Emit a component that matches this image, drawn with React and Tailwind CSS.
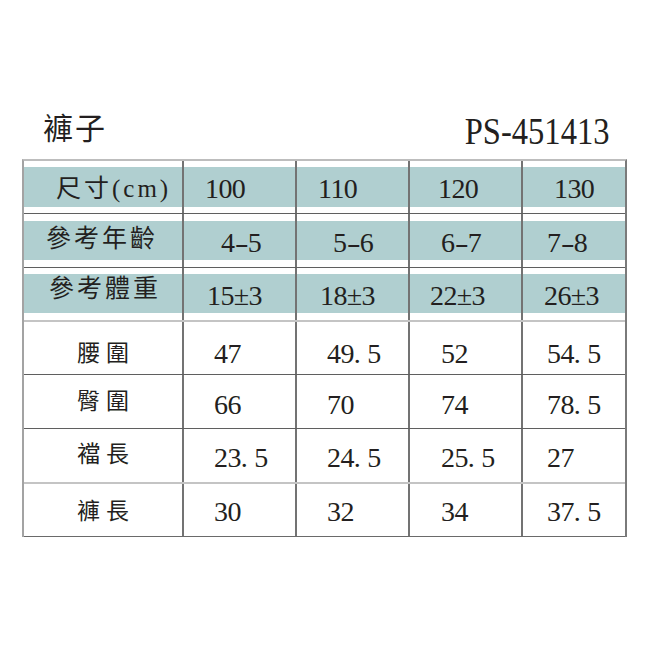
import React from "react";

const FONT = "[font-family:Liberation_Serif,Noto_Sans_CJK_TC,serif]";

function Num({ text }) {
  return (
    <span className="text-[28px] leading-none tracking-[-0.6px] whitespace-nowrap">
      {text.split("").map((ch, i) => {
        if (ch === ".")
          return (
            <span key={i} className="inline-block w-[0.48em]">
              .
            </span>
          );
        if (ch === "-")
          return (
            <span key={i} className="inline-block w-[0.48em] text-center">
              <span className="inline-block scale-x-150">-</span>
            </span>
          );
        return <span key={i}>{ch}</span>;
      })}
    </span>
  );
}

const COLS = [
  "w-[160px] border-r-2 border-r-[#737373]",
  "w-[113px] border-r-2 border-r-[#737373]",
  "w-[113px] border-r-2 border-r-[#737373]",
  "w-[113px] border-r-2 border-r-[#737373]",
  "w-[102px]",
];

const headerRows = [
  {
    row: "h-[53px] border-b border-b-[#5f5f5f]",
    mt: "mt-[6px]",
    band: "h-[40px]",
    label: "尺寸(cm)",
    labelCls: "pl-[32px] pt-[9px]",
    cells: [
      { t: "100", c: "pl-[21px] pt-[8px]" },
      { t: "110", c: "pl-[21px] pt-[8px]" },
      { t: "120", c: "pl-[28px] pt-[8px]" },
      { t: "130", c: "pl-[31px] pt-[8px]" },
    ],
  },
  {
    row: "h-[54px] border-b border-b-[#5f5f5f]",
    mt: "mt-[7px]",
    band: "h-[39px]",
    label: "參考年齡",
    labelCls: "pl-[22px] pt-[5px]",
    cells: [
      { t: "4-5", c: "pl-[37px] pt-[8px]" },
      { t: "5-6", c: "pl-[36px] pt-[8px]" },
      { t: "6-7", c: "pl-[31px] pt-[8px]" },
      { t: "7-8", c: "pl-[24px] pt-[8px]" },
    ],
  },
  {
    row: "h-[54px] border-b-2 border-b-[#c4c4c4]",
    mt: "mt-[6px]",
    band: "h-[39px]",
    label: "參考體重",
    labelCls: "pl-[25px] pt-[2px]",
    cells: [
      { t: "15±3", c: "pl-[23px] pt-[8px]" },
      { t: "18±3", c: "pl-[23px] pt-[8px]" },
      { t: "22±3", c: "pl-[20px] pt-[8px]" },
      { t: "26±3", c: "pl-[21px] pt-[8px]" },
    ],
  },
];

const dataRows = [
  {
    row: "h-[53px] border-b border-b-[#5f5f5f]",
    label: "腰圍",
    labelPt: "pt-[20px]",
    pt: "pt-[18px]",
    vals: ["47", "49.5", "52", "54.5"],
  },
  {
    row: "h-[54px] border-b border-b-[#5f5f5f]",
    label: "臀圍",
    labelPt: "pt-[15px]",
    pt: "pt-[16px]",
    vals: ["66", "70", "74", "78.5"],
  },
  {
    row: "h-[55px] border-b-2 border-b-[#c4c4c4]",
    label: "襠長",
    labelPt: "pt-[14px]",
    pt: "pt-[15px]",
    vals: ["23.5", "24.5", "25.5", "27"],
  },
  {
    row: "h-[53px] border-b border-b-[#6a6a6a]",
    label: "褲長",
    labelPt: "pt-[16px]",
    pt: "pt-[14px]",
    vals: ["30", "32", "34", "37.5"],
  },
];

const DATA_PL = ["pl-[30px]", "pl-[30px]", "pl-[31px]", "pl-[24px]"];

export default function App() {
  return (
    <div className={`w-[650px] h-[650px] bg-white text-[#231f20] pt-[113px] ${FONT}`}>
      <div className="h-[46px] pl-[43px] pr-[41px] flex justify-between items-start">
        <span className="text-[30px] leading-none tracking-[2px] mt-[1px]">褲子</span>
        <span className="inline-block origin-right scale-x-[0.88] text-[37px] leading-none whitespace-nowrap">
          PS-451413
        </span>
      </div>

      <div className="ml-[22px] w-[605px] border-t-2 border-t-[#bdbdbd] border-l-2 border-l-[#a3a3a3] border-r-2 border-r-[#7a7a7a]">
        {headerRows.map((r, ri) => (
          <div key={ri} className={`flex ${r.row}`}>
            <div className={`${COLS[0]} h-full`}>
              <div className={`${r.mt} ${r.band} bg-[#b0cfd0] ${r.labelCls}`}>
                <span className="text-[25px] leading-none tracking-[3px] whitespace-nowrap">
                  {r.label}
                </span>
              </div>
            </div>
            {r.cells.map((c, ci) => (
              <div key={ci} className={`${COLS[ci + 1]} h-full`}>
                <div className={`${r.mt} ${r.band} bg-[#b0cfd0] ${c.c}`}>
                  <Num text={c.t} />
                </div>
              </div>
            ))}
          </div>
        ))}

        {dataRows.map((r, ri) => (
          <div key={ri} className={`flex ${r.row}`}>
            <div className={`${COLS[0]} h-full pl-[53px] ${r.labelPt}`}>
              <span className="text-[23px] leading-none tracking-[6px] whitespace-nowrap">
                {r.label}
              </span>
            </div>
            {r.vals.map((v, ci) => (
              <div key={ci} className={`${COLS[ci + 1]} h-full ${DATA_PL[ci]} ${r.pt}`}>
                <Num text={v} />
              </div>
            ))}
          </div>
        ))}
      </div>
    </div>
  );
}
